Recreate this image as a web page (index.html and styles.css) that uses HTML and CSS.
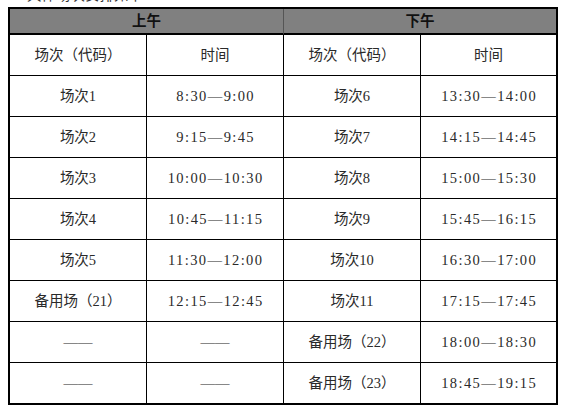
FILE: index.html
```html
<!DOCTYPE html>
<html lang="zh-CN">
<head>
<meta charset="utf-8">
<link rel="stylesheet" href="styles.css">
</head>
<body>
<div class="caption"><span>具体场次安排如下</span></div>
<table class="schedule">
  <colgroup>
    <col class="c1"><col class="c2"><col class="c3"><col class="c4">
  </colgroup>
  <tr class="band">
    <th colspan="2">上午</th>
    <th colspan="2" class="last">下午</th>
  </tr>
  <tr>
    <td>场次（代码）</td><td>时间</td><td>场次（代码）</td><td class="last">时间</td>
  </tr>
  <tr>
    <td>场次1</td><td class="t">8:30—9:00</td><td>场次6</td><td class="t last">13:30—14:00</td>
  </tr>
  <tr>
    <td>场次2</td><td class="t">9:15—9:45</td><td>场次7</td><td class="t last">14:15—14:45</td>
  </tr>
  <tr>
    <td>场次3</td><td class="t">10:00—10:30</td><td>场次8</td><td class="t last">15:00—15:30</td>
  </tr>
  <tr>
    <td>场次4</td><td class="t">10:45—11:15</td><td>场次9</td><td class="t last">15:45—16:15</td>
  </tr>
  <tr>
    <td>场次5</td><td class="t">11:30—12:00</td><td>场次10</td><td class="t last">16:30—17:00</td>
  </tr>
  <tr>
    <td>备用场（21）</td><td class="t">12:15—12:45</td><td>场次11</td><td class="t last">17:15—17:45</td>
  </tr>
  <tr>
    <td>——</td><td>——</td><td>备用场（22）</td><td class="t last">18:00—18:30</td>
  </tr>
  <tr class="end">
    <td>——</td><td>——</td><td>备用场（23）</td><td class="t last">18:45—19:15</td>
  </tr>
</table>
</body>
</html>
```
FILE: styles.css
```css
html, body {
  margin: 0;
  padding: 0;
  background: #ffffff;
}
body {
  width: 565px;
  height: 410px;
  overflow: hidden;
  font-family: "Liberation Serif", "Noto Sans CJK SC", serif;
  font-size: 14.5px;
  color: #2a2a2a;
}
.caption {
  height: 7px;
  overflow: hidden;
  padding-left: 27px;
}
.caption span {
  display: block;
  margin-top: -13px;
  line-height: 16px;
  color: #333;
}
.schedule {
  margin-left: 8px;
  border: 2px solid #000;
  border-spacing: 0;
  table-layout: fixed;
  width: 550px;
}
.c1, .c2, .c3 { width: 137px; }
.c4 { width: 135px; }
.schedule th,
.schedule td {
  box-sizing: border-box;
  padding: 0;
  text-align: center;
  vertical-align: middle;
  border-right: 1px solid #000;
  border-bottom: 1px solid #000;
  white-space: nowrap;
}
.schedule .last { border-right: none; }
.band th {
  height: 26px;
  background: #808080;
  border-bottom: 2px solid #000;
  border-right-color: #555;
  font-weight: 700;
  color: #111;
  font-size: 14.5px;
  line-height: 20px;
}
.schedule td {
  height: 41px;
  line-height: 20px;
}
.schedule td.t {
  letter-spacing: 1.4px;
  padding-left: 1.4px;
}
.end td {
  height: 40px;
  border-bottom: none;
}
```
